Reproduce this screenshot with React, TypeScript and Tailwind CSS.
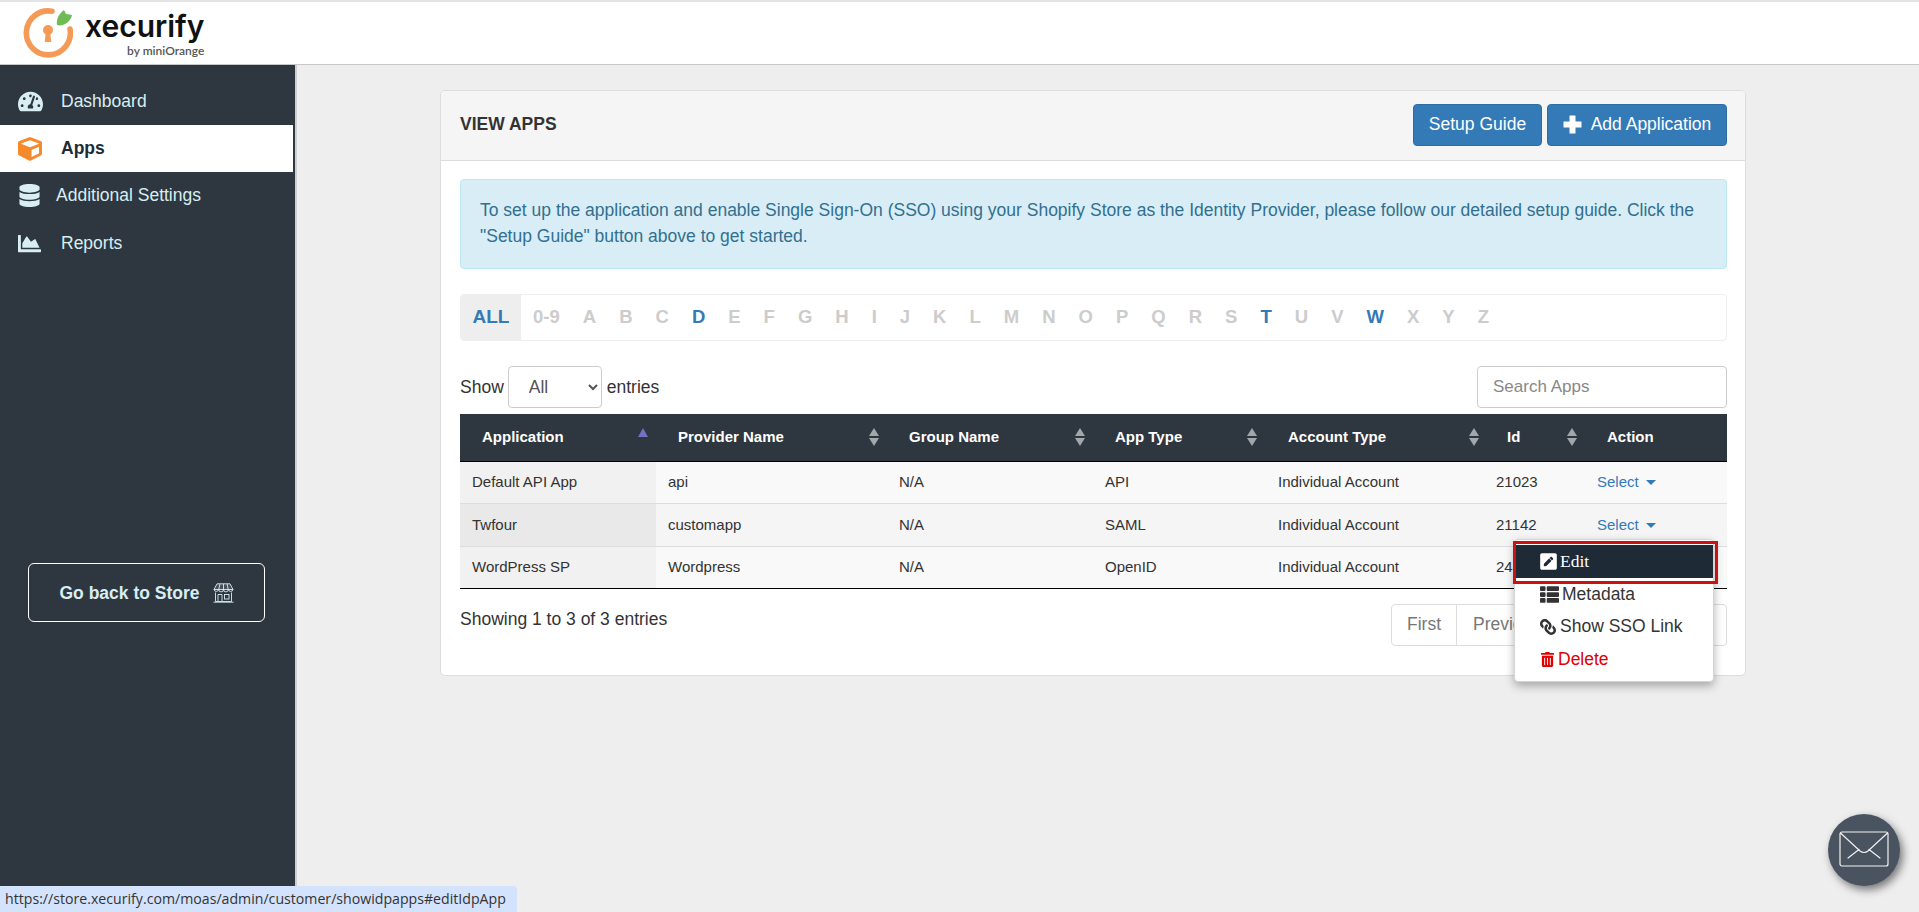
import React from "react";
import { FaTachometerAlt, FaCube, FaDatabase, FaChartArea, FaThList, FaLink, FaTrashAlt, FaPenSquare } from "react-icons/fa";

const letters = ["0-9","A","B","C","D","E","F","G","H","I","J","K","L","M","N","O","P","Q","R","S","T","U","V","W","X","Y","Z"];
const active = ["D","T","W"];
const rows = [
  ["Default API App","api","N/A","API","Individual Account","21023"],
  ["Twfour","customapp","N/A","SAML","Individual Account","21142"],
  ["WordPress SP","Wordpress","N/A","OpenID","Individual Account","24016"],
];
const heads = [
  ["Application","w-[196px]"],["Provider Name","w-[231px]"],["Group Name","w-[206px]"],["App Type","w-[173px]"],["Account Type","w-[219px]"],["Id","w-[100px]"],
];

function Sort({ asc, shift }: { asc?: boolean; shift?: string }) {
  if (asc) return <span className="absolute right-[8px] top-[14px] w-0 h-0 border-x-[5px] border-x-transparent border-b-[9px] border-b-[#7271c4]" />;
  return (
    <span className={`absolute ${shift ?? "right-[8px]"} top-[14px] flex flex-col gap-[2px]`}>
      <span className="w-0 h-0 border-x-[5.5px] border-x-transparent border-b-[8px] border-b-[#a3a7aa]" />
      <span className="w-0 h-0 border-x-[5.5px] border-x-transparent border-t-[8px] border-t-[#a3a7aa]" />
    </span>
  );
}

function NavItem({ icon, label, activeItem, gap, tall }: { icon: React.ReactNode; label: string; activeItem?: boolean; gap: string; tall?: boolean }) {
  return (
    <div className={activeItem ? "h-[47px] flex items-center pl-[18px] bg-white text-[#1e2a3a] font-bold w-[293px]" : tall ? "h-[48px] flex items-center pl-[18px] text-[#d8eef2]" : "h-[47px] flex items-center pl-[18px] text-[#d8eef2]"}>
      <span className="w-[26px] flex justify-start">{icon}</span>
      <span className={gap}>{label}</span>
    </div>
  );
}

function StoreIcon() {
  return (
    <svg width="21" height="20" viewBox="0 0 21 20" fill="none" stroke="#d8eef2" strokeWidth="0.9">
      <path d="M4 .8 H17 L20 6.5 H1 Z" fill="#d8eef2" fillOpacity="0.15" />
      <path d="M1 6.5 a2.4 2.4 0 0 0 4.7 0 a2.4 2.4 0 0 0 4.8 0 a2.4 2.4 0 0 0 4.8 0 a2.4 2.4 0 0 0 4.7 0" />
      <path d="M7 1 L5.7 6.5 M10.5 1 V6.5 M14 1 L15.3 6.5" />
      <path d="M2.5 9.5 V18.5 H18.5 V9.5 M.5 19.2 H20.5" />
      <path d="M5 18.5 V11.5 H9 V18.5" />
      <rect x="11.5" y="11.5" width="4.5" height="4.5" />
    </svg>
  );
}

export default function App() {
  return (
    <div className="relative h-[912px] w-full overflow-hidden flex flex-col bg-[#eeeeee] text-[#333] font-['Liberation_Sans',Arial,sans-serif]">
      <header className="h-[65px] shrink-0 bg-white border-t-2 border-t-[#e4e4e4] border-b border-b-[#c8c8c8] flex items-start pl-[23px] pt-[6px]">
        <svg width="50" height="50" viewBox="0 0 50 50">
          <path d="M29 3.2 A22 22 0 1 0 47 21" fill="none" stroke="#f59a56" strokeWidth="5.6" strokeLinecap="round" />
          <circle cx="25" cy="22" r="5" fill="#f59a56" />
          <path d="M23 23 h4 l1.2 10 a1 1 0 0 1 -1 1 h-4.4 a1 1 0 0 1 -1 -1 z" fill="#f59a56" />
          <path d="M34 17 C33 10 37 5 41 2 L43 6 L49 7 C48 13 41 19 34 17 z" fill="#6fbb55" />
        </svg>
        <div className="ml-[12px] flex flex-col items-end leading-none mt-[2px]">
          <span className="text-[30px] font-semibold text-[#111] font-['Inter',sans-serif] leading-[32px]">xecurify</span>
          <span className="text-[12px] text-[#555] font-['Lato',sans-serif] font-semibold mt-[3px]">by miniOrange</span>
        </div>
      </header>
      <div className="flex-1 flex min-h-0">
        <aside className="w-[297px] shrink-0 bg-[#2e3640] border-r-2 border-r-[#cfcfcf] pt-[12px] flex flex-col text-[17.5px]">
          <NavItem tall icon={<FaTachometerAlt className="text-[#d8eef2] text-[25px]" />} label="Dashboard" gap="ml-[17px]" />
          <NavItem activeItem icon={<FaCube className="text-[#f5892c] text-[24px]" />} label="Apps" gap="ml-[17px]" />
          <NavItem icon={<FaDatabase className="text-[#d8eef2] text-[23px]" />} label="Additional Settings" gap="ml-[12px]" />
          <NavItem tall icon={<FaChartArea className="text-[#d8eef2] text-[23px]" />} label="Reports" gap="ml-[17px]" />
          <div className="mt-[296px] ml-[28px] w-[237px] h-[59px] pt-[1px] border border-white rounded-[6px] flex items-center justify-center gap-[13px] text-[#d8eef2] font-bold">
            <span>Go back to Store</span>
            <StoreIcon />
          </div>
        </aside>
        <main className="flex-1 min-w-0 pl-[143px] pr-[173px] pt-[25px]">
          <section className="h-[586px] bg-white border border-[#dddddd] rounded-[5px] overflow-hidden">
            <div className="h-[70px] bg-[#f5f5f5] border-b border-[#dddddd] flex items-center justify-between pl-[19px] pr-[18px] pb-[2px]">
              <span className="text-[17.5px] font-bold text-[#333]">VIEW APPS</span>
              <div className="flex gap-[5px] text-[17.5px] text-white">
                <button className="w-[129px] h-[42px] bg-[#337ab7] border border-[#2e6da4] rounded-[4px]">Setup Guide</button>
                <button className="w-[180px] h-[42px] bg-[#337ab7] border border-[#2e6da4] rounded-[4px] flex items-center justify-center gap-[9px]">
                  <svg width="19" height="19" viewBox="0 0 19 19" fill="#ffffff"><path d="M7 .5 H12 Q12.5 .5 12.5 1 V6.5 H18 Q18.5 6.5 18.5 7 V12 Q18.5 12.5 18 12.5 H12.5 V18 Q12.5 18.5 12 18.5 H7 Q6.5 18.5 6.5 18 V12.5 H1 Q.5 12.5 .5 12 V7 Q.5 6.5 1 6.5 H6.5 V1 Q6.5 .5 7 .5 Z" /></svg>
                  <span>Add Application</span>
                </button>
              </div>
            </div>
            <div className="pl-[19px] pr-[18px] pt-[18px]">
              <div className="h-[90px] bg-[#d9edf7] border border-[#bce8f1] rounded-[4px] text-[#31708f] text-[17.5px] leading-[26px] px-[19px] pt-[17px]">
                To set up the application and enable Single Sign-On (SSO) using your Shopify Store as the Identity Provider, please follow our detailed setup guide. Click the "Setup Guide" button above to get started.
              </div>
              <div className="mt-[25px] h-[47px] border border-[#eeeeee] rounded-[4px] flex items-stretch text-[18.5px] font-bold overflow-hidden">
                <span className="w-[60px] bg-[#eeeeee] text-[#337ab7] text-[19px] flex items-center justify-center">ALL</span>
                <div className="flex items-center pl-[12px] gap-[23px] pb-[1px]">
                  {letters.map((l) => (
                    <span key={l} className={active.includes(l) ? "text-[#337ab7]" : "text-[#cccccc]"}>{l}</span>
                  ))}
                </div>
              </div>
              <div className="mt-[25px] h-[42px] flex items-center justify-between text-[17.5px]">
                <div className="flex items-center gap-[4px]">
                  <span>Show</span>
                  <select className="w-[94px] h-[42px] bg-white border border-[#cccccc] rounded-[4px] pl-[16px] text-[#555] mr-[1px]">
                    <option>All</option>
                  </select>
                  <span>entries</span>
                </div>
                <input placeholder="Search Apps" className="w-[250px] h-[42px] border border-[#cccccc] rounded-[4px] px-[15px] text-[17px] placeholder:text-[#888]" />
              </div>
              <table className="mt-[6px] w-full table-fixed border-collapse text-[15px]">
                <thead>
                  <tr className="h-[47px] bg-[#2e3640] text-white border-b border-b-black">
                    {heads.map(([h, w], i) => (
                      <th key={h} className={`${w} relative text-left font-bold pl-[22px]`}>
                        {h}
                        <Sort asc={i === 0} shift={i === 3 ? "right-[9px]" : i === 4 ? "right-[6px]" : undefined} />
                      </th>
                    ))}
                    <th className="text-left font-bold pl-[22px]">Action</th>
                  </tr>
                </thead>
                <tbody>
                  {rows.map((r, ri) => (
                    <tr key={r[0]} className={ri === 1 ? "h-[43px] bg-[#f5f5f5] border-b border-b-[#dddddd]" : ri === 2 ? "h-[42px] bg-[#f9f9f9] border-b border-b-black" : "h-[42px] bg-[#f9f9f9] border-b border-b-[#dddddd]"}>
                      {r.map((c, i) => (
                        <td key={i} className={i === 0 ? (ri === 1 ? "pl-[12px] pt-[1px] bg-[#e9e9e9]" : "pl-[12px] pt-[1px] bg-[#f1f1f1]") : i === 5 ? "pl-[11px] pt-[1px]" : "pl-[12px] pt-[1px]"}>{c}</td>
                      ))}
                      <td className="pl-[12px] pt-[1px] text-[#337ab7]">
                        Select<span className="inline-block ml-[7px] mb-[2px] w-0 h-0 border-x-[5px] border-x-transparent border-t-[5px] border-t-[#337ab7]" />
                      </td>
                    </tr>
                  ))}
                </tbody>
              </table>
              <div className="mt-[15px] h-[42px] flex items-center justify-between text-[17.5px]">
                <span className="mb-[11px]">Showing 1 to 3 of 3 entries</span>
                <div className="w-[336px] h-[42px] border border-[#dddddd] rounded-[4px] flex items-stretch text-[#777]">
                  <span className="w-[65px] border-r border-[#dddddd] flex items-center justify-center">First</span>
                  <span className="pl-[16px] flex items-center">Previous</span>
                </div>
              </div>
            </div>
          </section>
        </main>
      </div>

      <div className="absolute left-[1514px] top-[539px] w-[200px] h-[143px] bg-white border border-[#d5d5d5] rounded-[4px] shadow-[0_4px_10px_rgba(0,0,0,0.3)] pt-[5px] text-[17.5px]">
        <div className="h-[33px] bg-[#1e2a35] text-white flex items-center pl-[24px] gap-[2px] font-['Liberation_Serif',serif]">
          <FaPenSquare className="text-[19px]" /><span>Edit</span>
        </div>
        <div className="h-[33px] flex items-center pl-[25px] gap-[3px] text-[#333]"><FaThList className="text-[19px]" /><span>Metadata</span></div>
        <div className="h-[31px] flex items-center pl-[25px] gap-[4px] text-[#333]"><FaLink className="text-[16px] -scale-x-100" /><span>Show SSO Link</span></div>
        <div className="h-[34px] flex items-center pl-[25px] gap-[3px] text-[#e00000]"><FaTrashAlt className="text-[15px]" /><span>Delete</span></div>
      </div>
      <div className="absolute left-[1513px] top-[541px] w-[205px] h-[43px] border-[3px] border-[#cc1111]" />

      <div className="absolute left-[1828px] top-[814px] w-[72px] h-[72px] rounded-full bg-[#4a5360] shadow-[3px_4px_8px_rgba(0,0,0,0.5)] flex items-center justify-center">
        <svg width="50" height="38" viewBox="0 0 50 38" fill="none" stroke="#f2f2f2" strokeWidth="1.2" strokeLinecap="round">
          <rect x="1" y="1" width="48" height="34" rx="2" />
          <path d="M1.5 2 L21 20 Q25 23 29 20 L48.5 2" />
          <path d="M9 27 L20 18.5 M41 27 L30 18.5" />
        </svg>
      </div>

      <div className="absolute left-0 bottom-0 w-[517px] h-[26px] bg-[#d3e3fd] rounded-tr-[4px] text-[14.15px] leading-[25px] pl-[5px] text-[#333] font-['Open_Sans',sans-serif]">
        https://store.xecurify.com/moas/admin/customer/showidpapps#editIdpApp
      </div>
    </div>
  );
}
